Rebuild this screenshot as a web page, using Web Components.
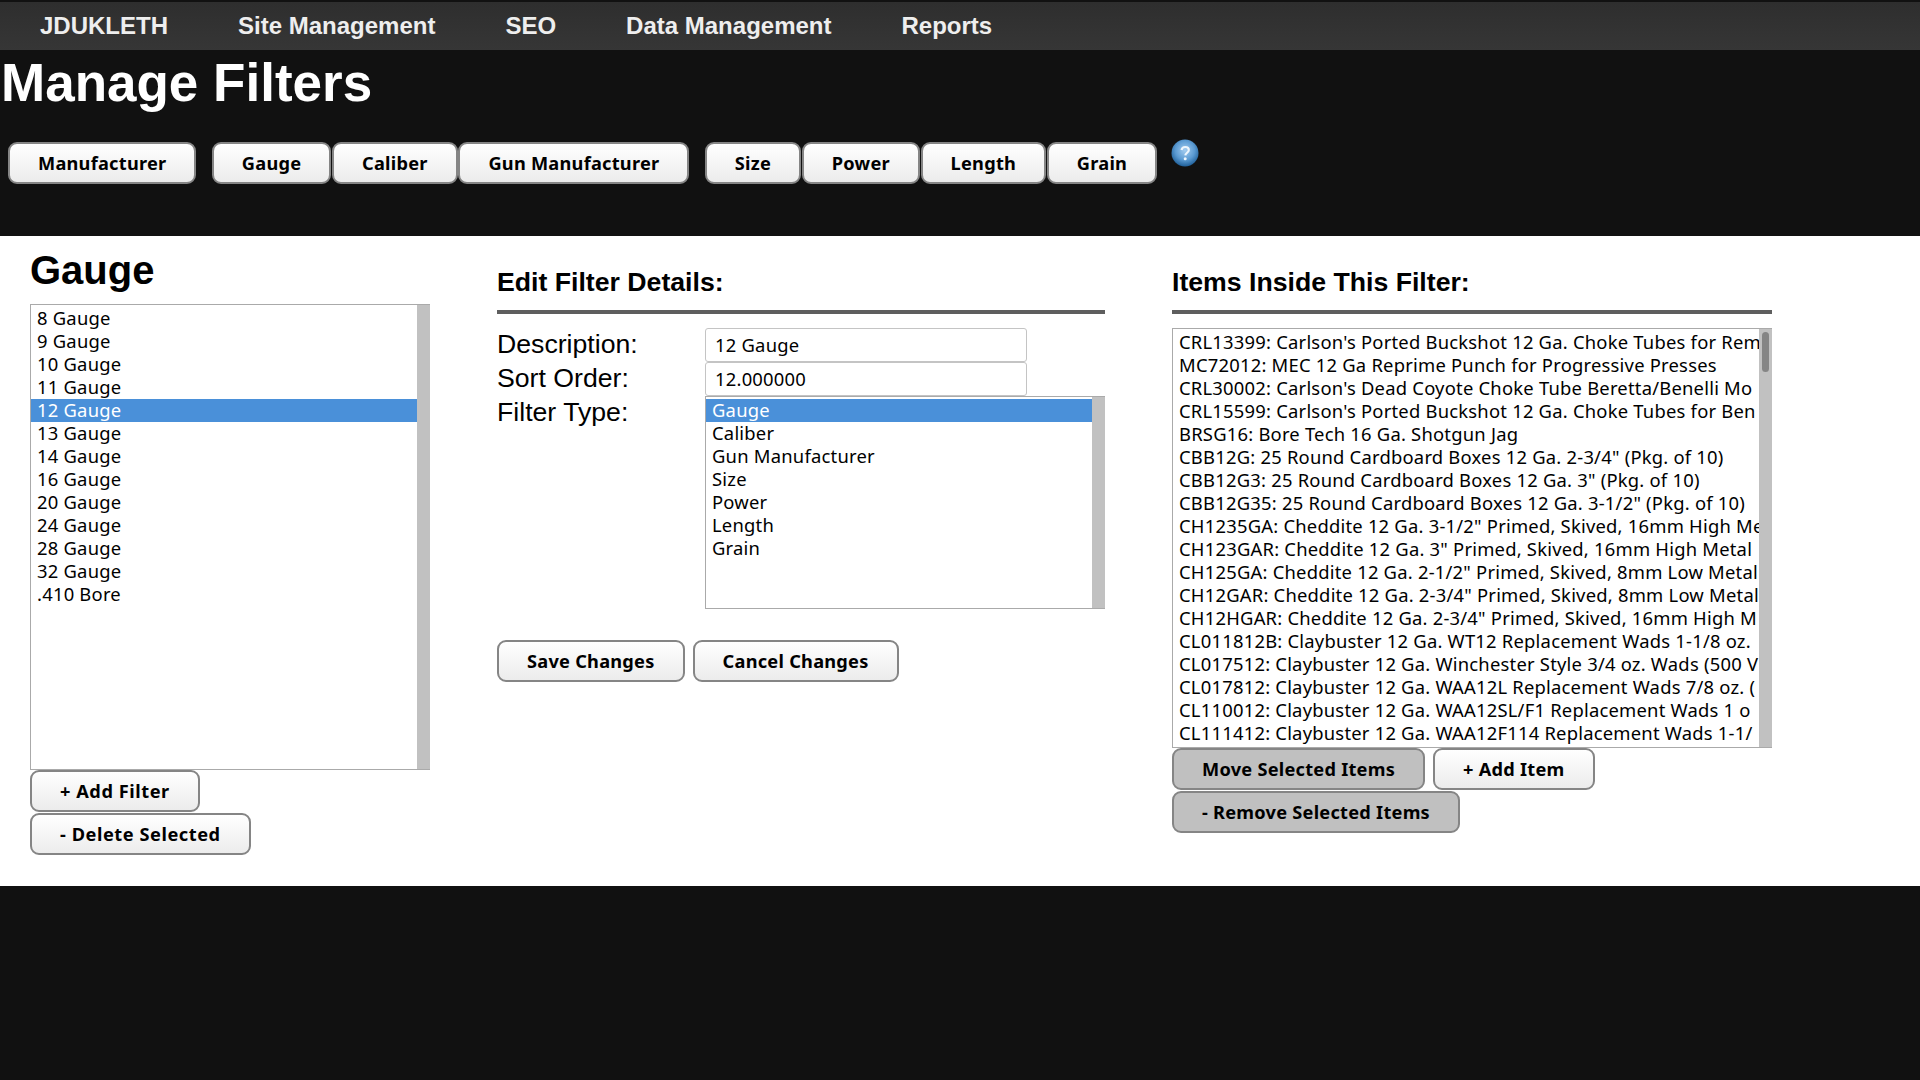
<!DOCTYPE html>
<html lang="en">
<head>
<meta charset="utf-8">
<title>Manage Filters</title>
<style>
  html, body { margin: 0; height: 100%; background: #111; }
  body { font-family: "Liberation Sans", Arial, sans-serif; color: #000; overflow: hidden; }
</style>
</head>
<body>
<admin-nav>
  <a>JDUKLETH</a><a>Site Management</a><a>SEO</a><a>Data Management</a><a>Reports</a>
</admin-nav>
<page-header title-text="Manage Filters">
  <pill-button>Manufacturer</pill-button>
  <span class="sep"></span>
  <pill-button>Gauge</pill-button>
  <pill-button>Caliber</pill-button>
  <pill-button>Gun Manufacturer</pill-button>
  <span class="sep"></span>
  <pill-button>Size</pill-button>
  <pill-button>Power</pill-button>
  <pill-button>Length</pill-button>
  <pill-button>Grain</pill-button>
  <help-icon></help-icon>
</page-header>
<filter-panel>
  <div slot="left">
    <big-title>Gauge</big-title>
    <list-box height="466">
      <list-option>8 Gauge</list-option>
      <list-option>9 Gauge</list-option>
      <list-option>10 Gauge</list-option>
      <list-option>11 Gauge</list-option>
      <list-option selected>12 Gauge</list-option>
      <list-option>13 Gauge</list-option>
      <list-option>14 Gauge</list-option>
      <list-option>16 Gauge</list-option>
      <list-option>20 Gauge</list-option>
      <list-option>24 Gauge</list-option>
      <list-option>28 Gauge</list-option>
      <list-option>32 Gauge</list-option>
      <list-option>.410 Bore</list-option>
    </list-box>
    <button-stack>
      <pill-button wide>+ Add Filter</pill-button>
      <pill-button wide>- Delete Selected</pill-button>
    </button-stack>
  </div>
  <div slot="middle">
    <section-head>Edit Filter Details:</section-head>
    <form-row label="Description:"><text-field value="12 Gauge"></text-field></form-row>
    <form-row label="Sort Order:"><text-field value="12.000000"></text-field></form-row>
    <form-row label="Filter Type:">
      <list-box height="213">
        <list-option selected>Gauge</list-option>
        <list-option>Caliber</list-option>
        <list-option>Gun Manufacturer</list-option>
        <list-option>Size</list-option>
        <list-option>Power</list-option>
        <list-option>Length</list-option>
        <list-option>Grain</list-option>
      </list-box>
    </form-row>
    <button-stack row top="31" gap="8">
      <pill-button>Save Changes</pill-button>
      <pill-button>Cancel Changes</pill-button>
    </button-stack>
  </div>
  <div slot="right">
    <section-head>Items Inside This Filter:</section-head>
    <list-box height="420" thumb>
      <list-option>CRL13399: Carlson's Ported Buckshot 12 Ga. Choke Tubes for Rem</list-option>
      <list-option>MC72012: MEC 12 Ga Reprime Punch for Progressive Presses</list-option>
      <list-option>CRL30002: Carlson's Dead Coyote Choke Tube Beretta/Benelli Mo</list-option>
      <list-option>CRL15599: Carlson's Ported Buckshot 12 Ga. Choke Tubes for Ben</list-option>
      <list-option>BRSG16: Bore Tech 16 Ga. Shotgun Jag</list-option>
      <list-option>CBB12G: 25 Round Cardboard Boxes 12 Ga. 2-3/4" (Pkg. of 10)</list-option>
      <list-option>CBB12G3: 25 Round Cardboard Boxes 12 Ga. 3" (Pkg. of 10)</list-option>
      <list-option>CBB12G35: 25 Round Cardboard Boxes 12 Ga. 3-1/2" (Pkg. of 10)</list-option>
      <list-option>CH1235GA: Cheddite 12 Ga. 3-1/2" Primed, Skived, 16mm High Me</list-option>
      <list-option>CH123GAR: Cheddite 12 Ga. 3" Primed, Skived, 16mm High Metal</list-option>
      <list-option>CH125GA: Cheddite 12 Ga. 2-1/2" Primed, Skived, 8mm Low Metal</list-option>
      <list-option>CH12GAR: Cheddite 12 Ga. 2-3/4" Primed, Skived, 8mm Low Metal</list-option>
      <list-option>CH12HGAR: Cheddite 12 Ga. 2-3/4" Primed, Skived, 16mm High M</list-option>
      <list-option>CL011812B: Claybuster 12 Ga. WT12 Replacement Wads 1-1/8 oz.</list-option>
      <list-option>CL017512: Claybuster 12 Ga. Winchester Style 3/4 oz. Wads (500 V</list-option>
      <list-option>CL017812: Claybuster 12 Ga. WAA12L Replacement Wads 7/8 oz. (</list-option>
      <list-option>CL110012: Claybuster 12 Ga. WAA12SL/F1 Replacement Wads 1 o</list-option>
      <list-option>CL111412: Claybuster 12 Ga. WAA12F114 Replacement Wads 1-1/</list-option>
    </list-box>
    <button-stack>
      <button-stack row gap="8">
        <pill-button grey>Move Selected Items</pill-button>
        <pill-button>+ Add Item</pill-button>
      </button-stack>
      <pill-button grey>- Remove Selected Items</pill-button>
    </button-stack>
  </div>
</filter-panel>
<script>
const UI_FONT = '"Noto Sans", "Open Sans", sans-serif'

class AdminNav extends HTMLElement {
    connectedCallback() {
        this.attachShadow({ mode: "open" })
        this.shadowRoot.innerHTML = `
      <style>
        :host { display: block; padding-top: 2px; background: #111; }
        nav {
          display: flex;
          height: 48px;
          align-items: center;
          padding-left: 5px;
          background: linear-gradient(#2e2e2e, #363636);
        }
        ::slotted(a) {
          padding: 0 35px;
          color: #eee;
          font: bold 24px "Liberation Sans", Arial, sans-serif;
          text-decoration: none;
        }
      </style>
      <nav><slot></slot></nav>
    `
    }
}

class PageHeader extends HTMLElement {
    connectedCallback() {
        this.attachShadow({ mode: "open" })
        this.shadowRoot.innerHTML = `
      <style>
        :host { display: block; height: 186px; background: #111; }
        h1 {
          margin: 0;
          padding: 1px 0 0 1px;
          height: 69px;
          color: #fff;
          font: bold 53px/64px "Liberation Sans", Arial, sans-serif;
        }
        .bar {
          display: flex;
          align-items: flex-start;
          padding: 22px 0 0 8px;
          gap: 0.7px;
        }
        ::slotted(.sep) { width: 14px; }
      </style>
      <h1></h1>
      <div class="bar"><slot></slot></div>
    `
        this.shadowRoot.querySelector("h1").textContent = this.getAttribute("title-text")
    }
}

class PillButton extends HTMLElement {
    connectedCallback() {
        this.attachShadow({ mode: "open" })
        this.shadowRoot.innerHTML = `
      <style>
        :host {
          display: inline-flex;
          box-sizing: border-box;
          height: 42px;
          align-items: center;
          padding: 0 28px;
          border: 2px solid #858585;
          border-radius: 9px;
          background: linear-gradient(#fff, #ececec);
          color: #000;
          font: bold 18.2px ${UI_FONT};
          letter-spacing: 0.25px;
          white-space: nowrap;
        }
        :host([wide]) { letter-spacing: 0.55px; }
        :host([grey]) { background: #c0c0c0; }
      </style>
      <slot></slot>
    `
    }
}

class HelpIcon extends HTMLElement {
    connectedCallback() {
        this.attachShadow({ mode: "open" })
        this.shadowRoot.innerHTML = `
      <style>
        :host { display: block; width: 28px; height: 28px; margin: -3px 0 0 13px; }
        svg { display: block; filter: blur(0.5px); }
      </style>
      <svg width="28" height="28" viewBox="0 0 28 28">
        <defs>
          <radialGradient id="ball" cx="50%" cy="40%" r="60%">
            <stop offset="0" stop-color="#a4cdf0"/>
            <stop offset="0.6" stop-color="#5a9ad2"/>
            <stop offset="1" stop-color="#1f5f98"/>
          </radialGradient>
        </defs>
        <circle cx="14" cy="14" r="13.5" fill="url(#ball)"/>
        <path d="M10.500 11c.4-2 1.800-3 3.700-3 2.200 0 3.600 1.300 3.600 3 0 2.600-3.300 2.800-3.500 5.300" fill="none" stroke="#eef6fc" stroke-width="2.200"/>
        <circle cx="14.200" cy="19.700" r="1.500" fill="#eef6fc"/>
      </svg>
    `
    }
}

class FilterPanel extends HTMLElement {
    connectedCallback() {
        this.attachShadow({ mode: "open" })
        this.shadowRoot.innerHTML = `
      <style>
        :host { display: block; height: 650px; background: #fff; }
        .cols {
          display: grid;
          grid-template-columns: 400px 608px 600px;
          gap: 67px;
          padding-left: 30px;
        }
      </style>
      <div class="cols">
        <slot name="left"></slot>
        <slot name="middle"></slot>
        <slot name="right"></slot>
      </div>
    `
    }
}

class BigTitle extends HTMLElement {
    connectedCallback() {
        this.attachShadow({ mode: "open" })
        this.shadowRoot.innerHTML = `
      <style>
        :host { display: block; height: 68px; }
        h2 { margin: 0; padding-top: 11px; font: bold 40px/46px "Liberation Sans", Arial, sans-serif; }
      </style>
      <h2><slot></slot></h2>
    `
    }
}

class SectionHead extends HTMLElement {
    connectedCallback() {
        this.attachShadow({ mode: "open" })
        this.shadowRoot.innerHTML = `
      <style>
        :host { display: block; height: 92px; }
        h3 {
          margin: 0;
          box-sizing: border-box;
          height: 78px;
          padding-top: 31px;
          border-bottom: 4px solid #5e5e5e;
          font: bold 26.67px/30px "Liberation Sans", Arial, sans-serif;
        }
      </style>
      <h3><slot></slot></h3>
    `
    }
}

class ListBox extends HTMLElement {
    connectedCallback() {
        this.attachShadow({ mode: "open" })
        const height = this.getAttribute("height")
        this.shadowRoot.innerHTML = `
      <style>
        :host {
          display: flex;
          box-sizing: border-box;
          height: ${height}px;
          border: 1px solid #aaa;
          border-right: 0;
          background: #fff;
        }
        .rows { flex: 1; min-width: 0; padding-top: 2px; overflow: hidden; }
        .track { position: relative; flex: none; width: 13px; background: #c1c1c1; }
        .thumb {
          position: absolute;
          top: 3px;
          left: 3px;
          width: 7px;
          height: 40px;
          border-radius: 4px;
          background: #858585;
        }
      </style>
      <div class="rows"><slot></slot></div>
      <div class="track">${this.hasAttribute("thumb") ? '<div class="thumb"></div>' : ""}</div>
    `
    }
}

class ListOption extends HTMLElement {
    connectedCallback() {
        this.attachShadow({ mode: "open" })
        this.shadowRoot.innerHTML = `
      <style>
        :host {
          display: block;
          height: 23px;
          padding-left: 6px;
          color: #000;
          font: 18.4px/22px ${UI_FONT};
          letter-spacing: 0.22px;
          white-space: nowrap;
        }
        :host([selected]) { background: #4a90d9; color: #fff; }
      </style>
      <slot></slot>
    `
    }
}

class ButtonStack extends HTMLElement {
    connectedCallback() {
        this.attachShadow({ mode: "open" })
        const top = this.getAttribute("top") || 0
        const gap = this.getAttribute("gap") || 9
        this.shadowRoot.innerHTML = `
      <style>
        :host {
          display: flex;
          flex-direction: column;
          align-items: flex-start;
          gap: 1px;
          padding-top: ${top}px;
        }
        :host([row]) { flex-direction: row; gap: ${gap}px; }
      </style>
      <slot></slot>
    `
    }
}

class FormRow extends HTMLElement {
    connectedCallback() {
        this.attachShadow({ mode: "open" })
        this.shadowRoot.innerHTML = `
      <style>
        :host {
          display: grid;
          grid-template-columns: 208px 1fr;
          font: 26.67px/32px "Liberation Sans", Arial, sans-serif;
        }
      </style>
      <div class="label"></div>
      <div><slot></slot></div>
    `
        this.shadowRoot.querySelector(".label").textContent = this.getAttribute("label")
    }
}

class TextField extends HTMLElement {
    connectedCallback() {
        this.attachShadow({ mode: "open" })
        this.shadowRoot.innerHTML = `
      <style>
        :host {
          display: block;
          box-sizing: border-box;
          width: 322px;
          height: 34px;
          padding-left: 9px;
          border: 1px solid #c4c4c4;
          border-radius: 3px;
          background: #fff;
          font: 18.4px/31px ${UI_FONT};
          letter-spacing: 0.22px;
        }
      </style>
      <span></span>
    `
        this.shadowRoot.querySelector("span").textContent = this.getAttribute("value")
    }
}

customElements.define("admin-nav", AdminNav)
customElements.define("page-header", PageHeader)
customElements.define("pill-button", PillButton)
customElements.define("help-icon", HelpIcon)
customElements.define("filter-panel", FilterPanel)
customElements.define("big-title", BigTitle)
customElements.define("section-head", SectionHead)
customElements.define("list-box", ListBox)
customElements.define("list-option", ListOption)
customElements.define("button-stack", ButtonStack)
customElements.define("form-row", FormRow)
customElements.define("text-field", TextField)
</script>
</body>
</html>
